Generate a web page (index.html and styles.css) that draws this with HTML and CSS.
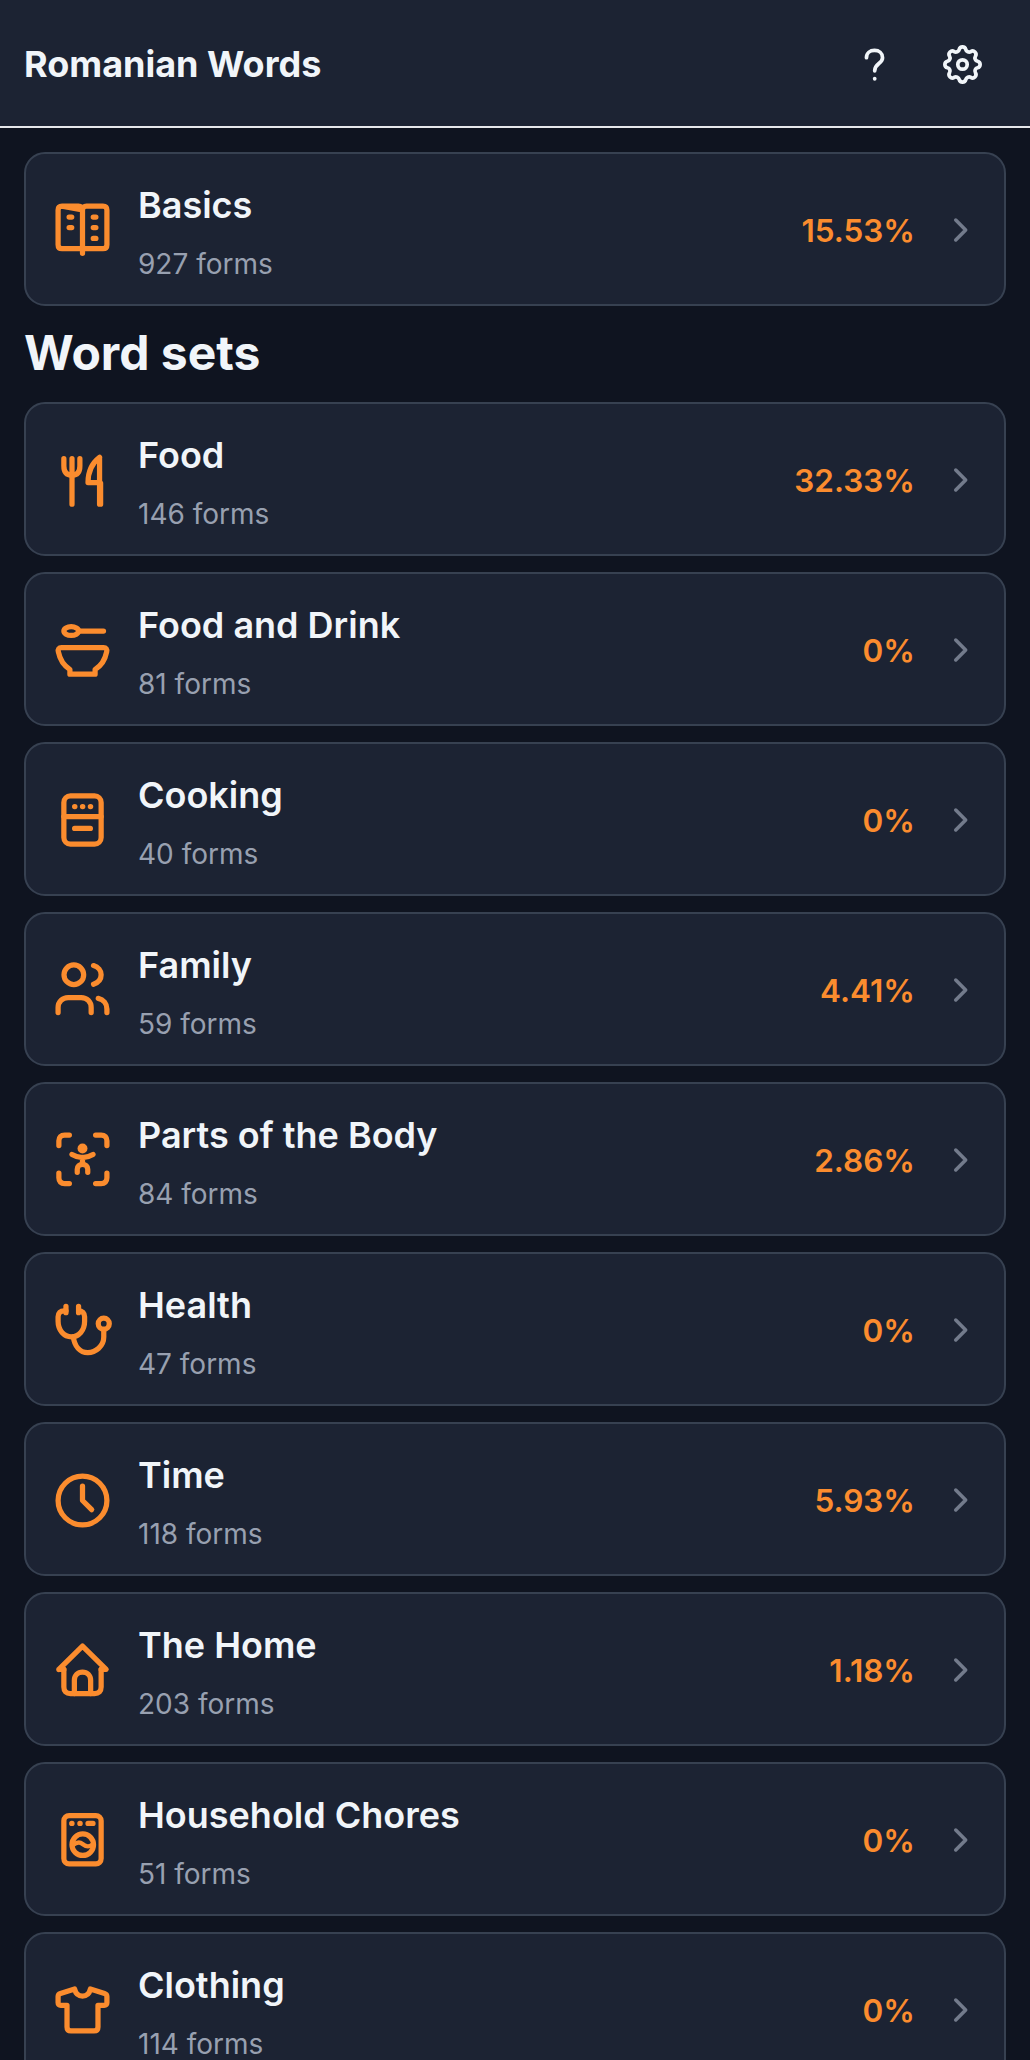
FILE: index.html
```html
<!doctype html>
<html>
<head>
	<meta charset="utf-8" />
	<title>Romanian Words</title>
	<link rel="stylesheet" href="styles.css">
</head>
<body>
	<header class="topbar">
		<h1 class="apptitle">Romanian Words</h1>
		<svg class="topicon helpicon" viewBox="0 0 24 24"><path d="M7.9 8.5C7.9 6.2 9.700 4.800 12 4.800s4.100 1.500 4.100 3.700c0 3.200-4 2.900-4 6.700"/><path d="M12.100 19.200v.1"/></svg>
		<svg class="topicon" viewBox="0 0 24 24"><circle cx="12" cy="12" r="2.400"/><path d="M10.325 4.317c.426 -1.756 2.924 -1.756 3.350 0a1.724 1.724 0 0 0 2.573 1.066c1.543 -.94 3.310 .826 2.370 2.370a1.724 1.724 0 0 0 1.065 2.572c1.756 .426 1.756 2.924 0 3.350a1.724 1.724 0 0 0 -1.066 2.573c.94 1.543 -.826 3.310 -2.370 2.370a1.724 1.724 0 0 0 -2.572 1.065c-.426 1.756 -2.924 1.756 -3.350 0a1.724 1.724 0 0 0 -2.573 -1.066c-1.543 .94 -3.310 -.826 -2.370 -2.370a1.724 1.724 0 0 0 -1.065 -2.572c-1.756 -.426 -1.756 -2.924 0 -3.350a1.724 1.724 0 0 0 1.066 -2.573c-.94 -1.543 .826 -3.310 2.370 -2.370c1 .608 2.296 .07 2.572 -1.065z"/></svg>
	</header>

	<main class="content">
		<a class="card">
			<svg class="cardicon" viewBox="0 0 24 24"><path d="M4.200 2.700H10.500C11.400 2.700 12 3.300 12 4.200V20.700M12 4.200C12 3.300 12.600 2.700 13.500 2.700H19.800C20.800 2.700 21.300 3.200 21.300 4.200V17.400C21.300 18.400 20.800 18.900 19.800 18.900H4.200C3.200 18.900 2.700 18.400 2.700 17.400V4.200C2.700 3.200 3.200 2.700 4.200 2.700z"/><path d="M6.900 6.900h1M6.900 10.900h1M16.100 6.900h1M16.100 10.900h1M16.100 15h1"/></svg>
			<div class="cardtext"><div class="cardname">Basics</div><div class="cardsub">927 forms</div></div>
			<div class="cardpct">15.53%</div>
			<svg class="chevron" viewBox="0 0 24 24"><path d="M9 5l7 7-7 7"/></svg>
		</a>

		<h2 class="sectiontitle">Word sets</h2>

		<div class="cardlist">
			<a class="card">
				<svg class="cardicon" viewBox="0 0 24 24"><path d="M4.900 3.700V6.500C4.900 8.800 6 10 8 10s3-1.200 3-3.500V3.700M8 3.700V21"/><path d="M18.500 3.200C15.500 5.500 14.100 8.500 14.100 12.800H18.500M18.500 3.200V21M18.900 13V21"/></svg>
				<div class="cardtext"><div class="cardname">Food</div><div class="cardsub">146 forms</div></div>
				<div class="cardpct">32.33%</div>
				<svg class="chevron" viewBox="0 0 24 24"><path d="M9 5l7 7-7 7"/></svg>
			</a>
			<a class="card">
				<svg class="cardicon" viewBox="0 0 24 24"><ellipse cx="7.700" cy="4.600" rx="2.800" ry="1.650"/><path d="M10.500 4.600H20"/><path d="M4 10.900H20C21 10.900 21.400 11.600 21.200 12.500C20.600 15.500 18.800 18 16.800 19.200V21H7.200V19.200C5.200 18 3.400 15.500 2.800 12.500C2.600 11.600 3 10.900 4 10.900z"/></svg>
				<div class="cardtext"><div class="cardname">Food and Drink</div><div class="cardsub">81 forms</div></div>
				<div class="cardpct">0%</div>
				<svg class="chevron" viewBox="0 0 24 24"><path d="M9 5l7 7-7 7"/></svg>
			</a>
			<a class="card">
				<svg class="cardicon" viewBox="0 0 24 24"><rect x="4.900" y="2.650" width="14.200" height="18.350" rx="2.500"/><path d="M4.900 10.500H19.100"/><path d="M9 6.700h.1M12 6.700h.1M15 6.700h.1"/><path d="M9 15H15"/></svg>
				<div class="cardtext"><div class="cardname">Cooking</div><div class="cardsub">40 forms</div></div>
				<div class="cardpct">0%</div>
				<svg class="chevron" viewBox="0 0 24 24"><path d="M9 5l7 7-7 7"/></svg>
			</a>
			<a class="card">
				<svg class="cardicon" viewBox="0 0 24 24"><circle cx="8.700" cy="6" r="3.750"/><path d="M16.200 2.500C18 3 19.100 4.400 19.100 6S18 9 16.200 9.600"/><path d="M2.700 20.400V18.500C2.700 16.300 4.400 14.700 6.500 14.700H11.500C13.700 14.700 15.300 16.300 15.300 18.500V20.400"/><path d="M18 15C20 15.400 21.300 17 21.300 19V20.400"/></svg>
				<div class="cardtext"><div class="cardname">Family</div><div class="cardsub">59 forms</div></div>
				<div class="cardpct">4.41%</div>
				<svg class="chevron" viewBox="0 0 24 24"><path d="M9 5l7 7-7 7"/></svg>
			</a>
			<a class="card">
				<svg class="cardicon" viewBox="0 0 24 24"><path d="M3 6.300V4.500C3 3.100 3.800 2.300 5.200 2.300H7M17 2.300H19.100C20.500 2.300 21.300 3.100 21.300 4.500V6.300M21.300 16.800V18.600C21.300 20 20.500 20.800 19.100 20.800H17M7 20.800H5.200C3.800 20.800 3 20 3 18.600V16.800"/><circle class="solid" cx="12" cy="7.400" r="1.900"/><path d="M8 9.700C10.500 11.200 13.500 11.200 16 9.700M12 10.800V13.500M10 16.500V15.300C10 14.200 10.800 13.500 12 13.500S14 14.200 14 15.300V16.500"/></svg>
				<div class="cardtext"><div class="cardname">Parts of the Body</div><div class="cardsub">84 forms</div></div>
				<div class="cardpct">2.86%</div>
				<svg class="chevron" viewBox="0 0 24 24"><path d="M9 5l7 7-7 7"/></svg>
			</a>
			<a class="card">
				<svg class="cardicon" viewBox="0 0 24 24"><path d="M5.700 4.500H5C3.600 4.500 2.700 5.400 2.700 6.800V8.500C2.700 12 5 14.400 7.800 14.400S12.800 12 12.800 8.500V6.800C12.800 5.400 11.900 4.500 10.500 4.500"/><path d="M5.700 2.800V5.200M10.500 2.800V5.200"/><path d="M8.500 14.400C9 18 11 20.400 14 20.400S20.100 18 20.100 14.500V11.700"/><circle cx="20.100" cy="9.400" r="2.100"/></svg>
				<div class="cardtext"><div class="cardname">Health</div><div class="cardsub">47 forms</div></div>
				<div class="cardpct">0%</div>
				<svg class="chevron" viewBox="0 0 24 24"><path d="M9 5l7 7-7 7"/></svg>
			</a>
			<a class="card">
				<svg class="cardicon" viewBox="0 0 24 24"><circle cx="12" cy="12" r="9.300"/><path d="M12 6.500V12L15.500 15.500"/></svg>
				<div class="cardtext"><div class="cardname">Time</div><div class="cardsub">118 forms</div></div>
				<div class="cardpct">5.93%</div>
				<svg class="chevron" viewBox="0 0 24 24"><path d="M9 5l7 7-7 7"/></svg>
			</a>
			<a class="card">
				<svg class="cardicon" viewBox="0 0 24 24"><path d="M3 11.600L12 2.700L21 11.600H19.100M3 11.600H4.900"/><path d="M4.900 11.600V18.300C4.900 19.900 5.800 20.800 7.400 20.800H16.600C18.200 20.800 19.100 19.900 19.100 18.300V11.600"/><path d="M8.900 20.800V15.700C8.900 13.900 10.200 12.600 12 12.600S15.100 13.900 15.100 15.700V20.800"/></svg>
				<div class="cardtext"><div class="cardname">The Home</div><div class="cardsub">203 forms</div></div>
				<div class="cardpct">1.18%</div>
				<svg class="chevron" viewBox="0 0 24 24"><path d="M9 5l7 7-7 7"/></svg>
			</a>
			<a class="card">
				<svg class="cardicon" viewBox="0 0 24 24"><rect x="4.900" y="2.500" width="14.200" height="18.400" rx="2"/><path d="M7.900 5.500h.1M11 5.500h.1M14.100 5.500H16"/><circle cx="12.100" cy="13.600" r="4.100"/><path class="wave" d="M8.500 13.600C10 12.500 11 12.500 12 13.300S14 14.800 15.700 13.600"/></svg>
				<div class="cardtext"><div class="cardname">Household Chores</div><div class="cardsub">51 forms</div></div>
				<div class="cardpct">0%</div>
				<svg class="chevron" viewBox="0 0 24 24"><path d="M9 5l7 7-7 7"/></svg>
			</a>
			<a class="card">
				<svg class="cardicon" viewBox="0 0 24 24"><path d="M9 3.800C9.400 5.600 10.500 6.500 12 6.500S14.600 5.600 15 3.800L20.400 5.500C21 5.700 21.300 6.100 21.300 6.700V9C21.300 9.600 20.900 10 20.300 10H17.900V18.300C17.900 19.300 17.400 19.800 16.400 19.800H7.600C6.600 19.800 6.100 19.300 6.100 18.300V10H3.700C3.100 10 2.700 9.600 2.700 9V6.700C2.700 6.100 3 5.700 3.600 5.500z"/></svg>
				<div class="cardtext"><div class="cardname">Clothing</div><div class="cardsub">114 forms</div></div>
				<div class="cardpct">0%</div>
				<svg class="chevron" viewBox="0 0 24 24"><path d="M9 5l7 7-7 7"/></svg>
			</a>
		</div>
	</main>
</body>
</html>
```

FILE: styles.css
```css
html, body
{
	margin: 0;
	padding: 0;
}

body
{
	height: 2060px;
	overflow: hidden;
	background-color: #0f1420;
	font-family: "Inter", "Liberation Sans", sans-serif;
	color: #f1f5f9;
}

.topbar
{
	display: flex;
	align-items: center;
	height: 124px;
	padding: 2px 44px 0 24px;
	background-color: #1c2333;
	border-bottom: 2px solid #e5e7eb;
}

.apptitle
{
	flex: 1;
	margin: 0;
	font-size: 36px;
	font-weight: 700;
}

.topicon
{
	width: 47px;
	height: 47px;
	fill: none;
	stroke: #f1f5f9;
	stroke-width: 1.9;
	stroke-linecap: round;
	stroke-linejoin: round;
}

.helpicon
{
	margin-right: 41px;
}

.content
{
	padding: 24px;
}

.card
{
	display: flex;
	align-items: center;
	box-sizing: border-box;
	height: 154px;
	padding: 2px 27px 0 25px;
	background-color: #1c2333;
	border: 2px solid #374151;
	border-radius: 21px;
}

.cardlist
{
	display: flex;
	flex-direction: column;
	gap: 16px;
}

.cardicon
{
	flex: none;
	width: 63px;
	height: 63px;
	margin-right: 24px;
	fill: none;
	stroke: #fb8c2e;
	stroke-width: 2;
	stroke-linecap: round;
	stroke-linejoin: round;
}

.cardicon .solid
{
	fill: #fb8c2e;
	stroke: none;
}

.cardicon .wave
{
	stroke-width: 1.7;
	stroke-linecap: butt;
}

.cardtext
{
	flex: 1;
	padding-top: 4px;
}

.cardname
{
	font-size: 36px;
	font-weight: 600;
	line-height: 46px;
}

.cardsub
{
	margin-top: 18px;
	font-size: 28px;
	line-height: 36px;
	color: #98a0b0;
}

.cardpct
{
	font-size: 31.5px;
	font-weight: 600;
	color: #fb8c2e;
}

.chevron
{
	flex: none;
	width: 34px;
	height: 34px;
	margin-left: 28px;
	fill: none;
	stroke: #737b8c;
	stroke-width: 2.5;
	stroke-linecap: round;
	stroke-linejoin: round;
}

.sectiontitle
{
	margin: 19px 0 21px;
	font-size: 48px;
	line-height: 56px;
	font-weight: 700;
}
```
